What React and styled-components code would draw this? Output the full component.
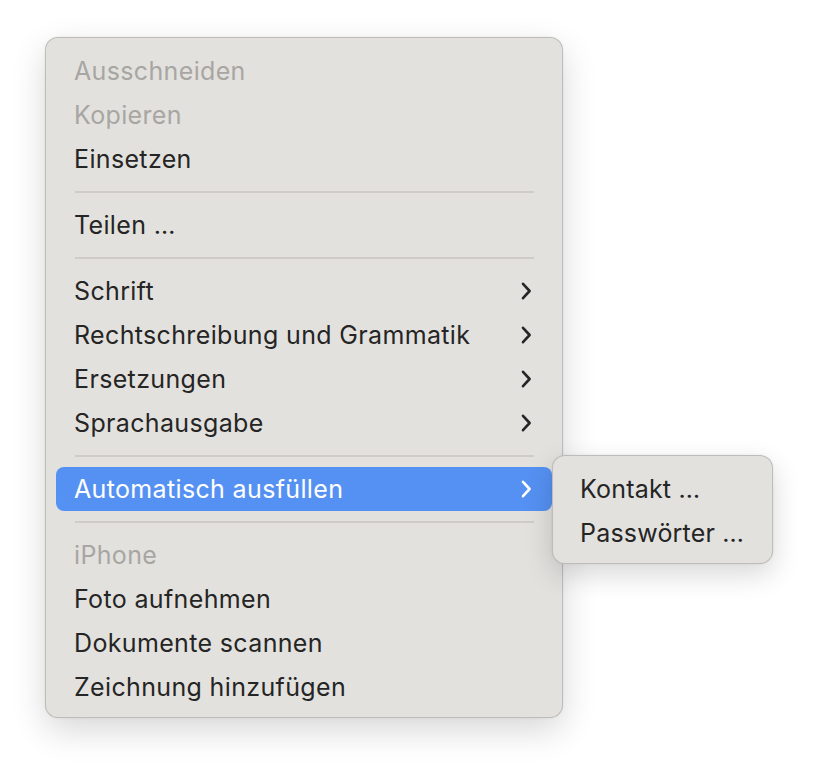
import React from 'react';
import styled, { createGlobalStyle } from 'styled-components';

const GlobalStyle = createGlobalStyle`
  html, body {
    margin: 0;
    padding: 0;
    background: #ffffff;
  }
  body {
    font-family: Inter, "Noto Sans", "Liberation Sans", sans-serif;
    -webkit-font-smoothing: antialiased;
  }
`;

const Page = styled.div`
  padding: 37px 0 0 45px;
  min-height: 772px;
  box-sizing: border-box;
`;

const Menu = styled.div`
  position: relative;
  width: 518px;
  box-sizing: border-box;
  padding: 11px 0 8px;
  background: #e3e1de;
  border: 1px solid rgba(0, 0, 0, 0.16);
  border-radius: 13px;
  box-shadow: 0 12px 34px rgba(0, 0, 0, 0.16), 0 0 3px rgba(0, 0, 0, 0.06);
`;

const Row = styled.div`
  position: relative;
  display: flex;
  align-items: center;
  justify-content: space-between;
  height: 44px;
  margin: 0 10px;
  padding: 0 20px 0 18px;
  border-radius: 8px;
  font-size: 25px;
  letter-spacing: 0.35px;
  color: ${p => (p.$active ? '#ffffff' : p.$disabled ? '#a8a6a3' : '#252525')};
  background: ${p => (p.$active ? '#5591f2' : 'transparent')};
`;

const Label = styled.span`
  white-space: nowrap;
`;

const Separator = styled.div`
  height: 2px;
  margin: 10px 28px 10px 29px;
  background: #cecbc8;
`;

const Submenu = styled.div`
  position: absolute;
  top: -12px;
  left: 100%;
  width: 221px;
  box-sizing: border-box;
  padding: 11px 0 8px;
  background: #e3e1de;
  border: 1px solid rgba(0, 0, 0, 0.16);
  border-radius: 13px;
  box-shadow: 0 10px 28px rgba(0, 0, 0, 0.16), 0 0 3px rgba(0, 0, 0, 0.06);
`;

const SubRow = styled.div`
  display: flex;
  align-items: center;
  height: 44px;
  padding: 0 27px;
  font-size: 25px;
  letter-spacing: 0.2px;
  color: #252525;
  white-space: nowrap;
`;

const Chevron = ({ color }) => (
  <svg width="12" height="20" viewBox="0 0 12 20" fill="none">
    <path
      d="M3 2.8 L9.6 10 L3 17.2"
      stroke={color}
      strokeWidth="2.6"
      strokeLinecap="round"
      strokeLinejoin="round"
    />
  </svg>
);

const groups = [
  [
    { label: 'Ausschneiden', disabled: true },
    { label: 'Kopieren', disabled: true },
    { label: 'Einsetzen' },
  ],
  [{ label: 'Teilen …' }],
  [
    { label: 'Schrift', sub: true },
    { label: 'Rechtschreibung und Grammatik', sub: true },
    { label: 'Ersetzungen', sub: true },
    { label: 'Sprachausgabe', sub: true },
  ],
  [{ label: 'Automatisch ausfüllen', sub: true, active: true }],
  [
    { label: 'iPhone', disabled: true },
    { label: 'Foto aufnehmen' },
    { label: 'Dokumente scannen' },
    { label: 'Zeichnung hinzufügen' },
  ],
];

const submenuItems = ['Kontakt …', 'Passwörter …'];

export default function App() {
  return (
    <>
      <GlobalStyle />
      <Page>
        <Menu>
          {groups.map((group, gi) => (
            <React.Fragment key={gi}>
              {gi > 0 && <Separator />}
              {group.map(item => (
                <Row key={item.label} $disabled={item.disabled} $active={item.active}>
                  <Label>{item.label}</Label>
                  {item.sub && <Chevron color={item.active ? '#ffffff' : '#252525'} />}
                  {item.active && (
                    <Submenu>
                      {submenuItems.map(s => (
                        <SubRow key={s}>{s}</SubRow>
                      ))}
                    </Submenu>
                  )}
                </Row>
              ))}
            </React.Fragment>
          ))}
        </Menu>
      </Page>
    </>
  );
}
